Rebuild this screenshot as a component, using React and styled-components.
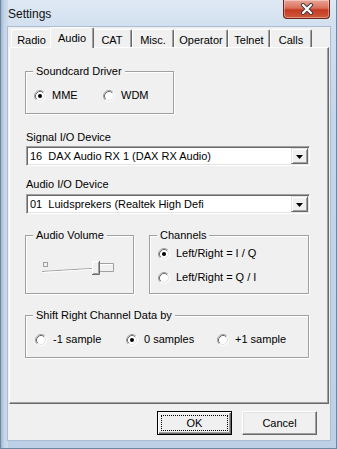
import React from 'react'
import styled, { createGlobalStyle } from 'styled-components'

const GlobalStyle = createGlobalStyle`
html, body {
margin: 0;
padding: 0;
background: #c6d7ea;
}
`

const tabs = [
    { label: 'Radio', width: 41 },
    { label: 'Audio', width: 44, active: true },
    { label: 'CAT', width: 40 },
    { label: 'Misc.', width: 42 },
    { label: 'Operator', width: 54 },
    { label: 'Telnet', width: 42 },
    { label: 'Calls', width: 42 },
]

const Radio = ({ checked }) => (
    <RadioMark width="12" height="12" viewBox="0 0 12 12">
        <circle cx="6" cy="6" r="5" fill="#fff" />
        <path d="M9.89 2.11 A5.5 5.5 0 0 0 2.11 9.89" fill="none" stroke="#a0a0a0" />
        <path d="M2.11 9.89 A5.5 5.5 0 0 0 9.89 2.11" fill="none" stroke="#fff" />
        <path d="M9.18 2.82 A4.5 4.5 0 0 0 2.82 9.18" fill="none" stroke="#696969" />
        <path d="M2.82 9.18 A4.5 4.5 0 0 0 9.18 2.82" fill="none" stroke="#e3e3e3" />
        {checked && <circle cx="6" cy="6" r="2" fill="#000" />}
    </RadioMark>
)

const Option = ({ checked, width, children }) => (
    <OptionItem $width={width}>
        <Radio checked={checked} />
        <span>{children}</span>
    </OptionItem>
)

const Combo = ({ value }) => (
    <ComboBox>
        <ComboText>{value}</ComboText>
        <DropButton>
            <svg width="7" height="4" viewBox="0 0 7 4">
                <path d="M0 0 H7 L3.5 4 Z" fill="#000" />
            </svg>
        </DropButton>
    </ComboBox>
)

const VolumeSlider = () => (
    <svg width="76" height="20" viewBox="0 0 76 20">
        <rect x="2.5" y="4.5" width="4" height="4" fill="none" stroke="#a0a0a0" />
        <path d="M1 13.5 L51 10.5" stroke="#a0a0a0" fill="none" />
        <path d="M1 14.5 L51 11.5" stroke="#ffffff" fill="none" />
        <path d="M59 5.5 H72.5 V13.5 H59" stroke="#a0a0a0" fill="none" />
        <path d="M59 6.5 H71.5" stroke="#ffffff" fill="none" />
        <rect x="51" y="3" width="8" height="14" fill="#f0f0f0" />
        <path d="M51.5 16.5 V3.5 H58.5" stroke="#ffffff" fill="none" />
        <path d="M51 16.5 H58.5 V3" stroke="#696969" fill="none" />
        <path d="M52 15.5 H57.5 V4" stroke="#a0a0a0" fill="none" />
    </svg>
)

const App = () => {
    return (
        <>
            <GlobalStyle />
            <Window>
                <TitleBar>
                    <Title>Settings</Title>
                    <CloseButton>
                        <svg width="14" height="12" viewBox="0 0 14 12">
                            <path d="M3 2 L11 10 M11 2 L3 10" stroke="#3b3b3b" strokeWidth="4" strokeLinecap="round" />
                            <path d="M3 2 L11 10 M11 2 L3 10" stroke="#ffffff" strokeWidth="2.2" strokeLinecap="round" />
                        </svg>
                    </CloseButton>
                </TitleBar>
                <Client>
                    <TabStrip>
                        {tabs.map(t => (
                            <Tab key={t.label} $width={t.width} $active={t.active}>{t.label}</Tab>
                        ))}
                    </TabStrip>
                    <Panel>
                        <GroupBox $width={149} $height={43} $top={23} $pad={17}>
                            <Caption>Soundcard Driver</Caption>
                            <OptionRow>
                                <Option checked width={69}>MME</Option>
                                <Option>WDM</Option>
                            </OptionRow>
                        </GroupBox>

                        <FieldLabel $top={17}>Signal I/O Device</FieldLabel>
                        <ComboWrap $top={2}>
                            <Combo value="16  DAX Audio RX 1 (DAX RX Audio)" />
                        </ComboWrap>

                        <FieldLabel $top={12}>Audio I/O Device</FieldLabel>
                        <ComboWrap $top={3}>
                            <Combo value="01  Luidsprekers (Realtek High Defi" />
                        </ComboWrap>

                        <GroupRow>
                            <GroupBox $width={109} $height={59} $pad={22} $left={15}>
                                <Caption>Audio Volume</Caption>
                                <VolumeSlider />
                            </GroupBox>
                            <GroupBox $width={160} $height={59} $pad={11}>
                                <Caption>Channels</Caption>
                                <OptionColumn>
                                    <Option checked>Left/Right = I / Q</Option>
                                    <Option>Left/Right = Q / I</Option>
                                </OptionColumn>
                            </GroupBox>
                        </GroupRow>

                        <GroupBox $width={284} $height={43} $top={21} $pad={17} $left={9}>
                            <Caption>Shift Right Channel Data by</Caption>
                            <OptionRow>
                                <Option width={91}>-1 sample</Option>
                                <Option checked width={91}>0 samples</Option>
                                <Option>+1 sample</Option>
                            </OptionRow>
                        </GroupBox>
                    </Panel>
                    <ButtonRow>
                        <DefaultButton><FocusRing>OK</FocusRing></DefaultButton>
                        <PushButton>Cancel</PushButton>
                    </ButtonRow>
                </Client>
            </Window>
        </>
    )
}

export default App

const Window = styled.div`
width:337px;
height:449px;
box-sizing:border-box;
padding:0 6px 8px 7px;
display:flex;
flex-direction:column;
background:
  linear-gradient(to right, #9fb6cf 0, #c3d4e7 3px, #cddcec 7px, transparent 7px),
  linear-gradient(to bottom, #dfe9f4 0, #d2e0ef 26px, #c4d6ea 120px, #bdd0e5 100%);
border:1px solid #6f879f;
border-top:none;
font-family:"Liberation Sans", Arial, sans-serif;
font-size:11px;
color:#000;
`

const TitleBar = styled.div`
height:27px;
flex:none;
display:flex;
justify-content:space-between;
align-items:flex-start;
`

const Title = styled.div`
padding-top:7px;
font-size:12px;
color:#111;
`

const CloseButton = styled.div`
width:45px;
height:18px;
display:flex;
align-items:center;
justify-content:center;
border:1px solid #6a2419;
border-top:none;
border-radius:0 0 4px 4px;
background:linear-gradient(to bottom, #eaa597 0, #d9705b 45%, #c43a22 55%, #d05a3c 100%);
box-shadow:inset 0 0 0 1px rgba(255,255,255,0.35);
`

const Client = styled.div`
flex:1;
display:flex;
flex-direction:column;
background:#f0f0f0;
padding:0 1px;
box-shadow:0 0 0 1px #a9bcd1;
`

const TabStrip = styled.div`
height:20px;
flex:none;
display:flex;
align-items:flex-end;
padding-left:2px;
position:relative;
z-index:1;
`

const Tab = styled.div`
width:${p => p.$width}px;
height:${p => p.$active ? 21 : 18}px;
margin:${p => p.$active ? '0 -2px -1px' : '0'};
box-sizing:border-box;
display:flex;
justify-content:center;
align-items:${p => p.$active ? 'flex-start' : 'center'};
padding-top:${p => p.$active ? 4 : 2}px;
background:#f0f0f0;
border-top:1px solid #fff;
border-left:1px solid #fff;
border-right:1px solid #696969;
border-radius:2px 2px 0 0;
box-shadow:inset -1px 0 0 #a0a0a0;
position:relative;
z-index:${p => p.$active ? 2 : 1};
`

const Panel = styled.div`
height:357px;
flex:none;
box-sizing:border-box;
display:flex;
flex-direction:column;
padding:0 0 0 15px;
border-top:1px solid #fff;
border-left:1px solid #fff;
border-right:1px solid #696969;
border-bottom:1px solid #696969;
box-shadow:inset -1px -1px 0 #a0a0a0;
`

const GroupBox = styled.div`
width:${p => p.$width}px;
height:${p => p.$height}px;
margin-top:${p => p.$top || 0}px;
box-sizing:border-box;
flex:none;
position:relative;
padding:${p => p.$pad}px 0 0 ${p => p.$left || 8}px;
border:1px solid #a0a0a0;
box-shadow:inset 1px 1px 0 #fff, 1px 1px 0 #fff;
`

const Caption = styled.span`
position:absolute;
top:-7px;
left:7px;
padding:0 3px;
line-height:13px;
background:#f0f0f0;
`

const OptionRow = styled.div`
display:flex;
`

const OptionColumn = styled.div`
display:flex;
flex-direction:column;
gap:11px;
`

const OptionItem = styled.div`
display:flex;
align-items:center;
gap:6px;
height:13px;
line-height:13px;
width:${p => p.$width ? `${p.$width}px` : 'auto'};
`

const RadioMark = styled.svg`
flex:none;
display:block;
`

const FieldLabel = styled.div`
margin-top:${p => p.$top}px;
margin-left:1px;
line-height:13px;
`

const ComboWrap = styled.div`
margin-top:${p => p.$top}px;
margin-left:1px;
`

const ComboBox = styled.div`
width:284px;
height:20px;
box-sizing:border-box;
display:flex;
align-items:center;
background:#fff;
border-top:1px solid #a0a0a0;
border-left:1px solid #a0a0a0;
border-right:1px solid #fff;
border-bottom:1px solid #fff;
box-shadow:inset 1px 1px 0 #696969, inset -1px -1px 0 #e3e3e3;
padding:1px 1px 1px 3px;
`

const ComboText = styled.div`
flex:1;
line-height:14px;
white-space:pre;
overflow:hidden;
`

const DropButton = styled.div`
width:17px;
height:16px;
box-sizing:border-box;
flex:none;
display:flex;
align-items:center;
justify-content:center;
padding-top:1px;
background:#f0f0f0;
border-top:1px solid #e3e3e3;
border-left:1px solid #e3e3e3;
border-right:1px solid #696969;
border-bottom:1px solid #696969;
box-shadow:inset 1px 1px 0 #fff, inset -1px -1px 0 #a0a0a0;
`

const GroupRow = styled.div`
display:flex;
gap:15px;
margin-top:21px;
`

const ButtonRow = styled.div`
display:flex;
justify-content:flex-end;
gap:10px;
padding:7px 12px 0 0;
`

const PushButton = styled.div`
width:75px;
height:24px;
box-sizing:border-box;
display:flex;
align-items:center;
justify-content:center;
background:#f0f0f0;
border-top:1px solid #fff;
border-left:1px solid #fff;
border-right:1px solid #696969;
border-bottom:1px solid #696969;
box-shadow:inset -1px -1px 0 #a0a0a0, inset 1px 1px 0 #e3e3e3;
`

const DefaultButton = styled(PushButton)`
border:1px solid #000;
box-shadow:inset 1px 1px 0 #fff, inset -1px -1px 0 #696969, inset -2px -2px 0 #a0a0a0;
padding:3px;
`

const FocusRing = styled.div`
width:100%;
height:100%;
box-sizing:border-box;
display:flex;
align-items:center;
justify-content:center;
border:1px dotted #000;
`
